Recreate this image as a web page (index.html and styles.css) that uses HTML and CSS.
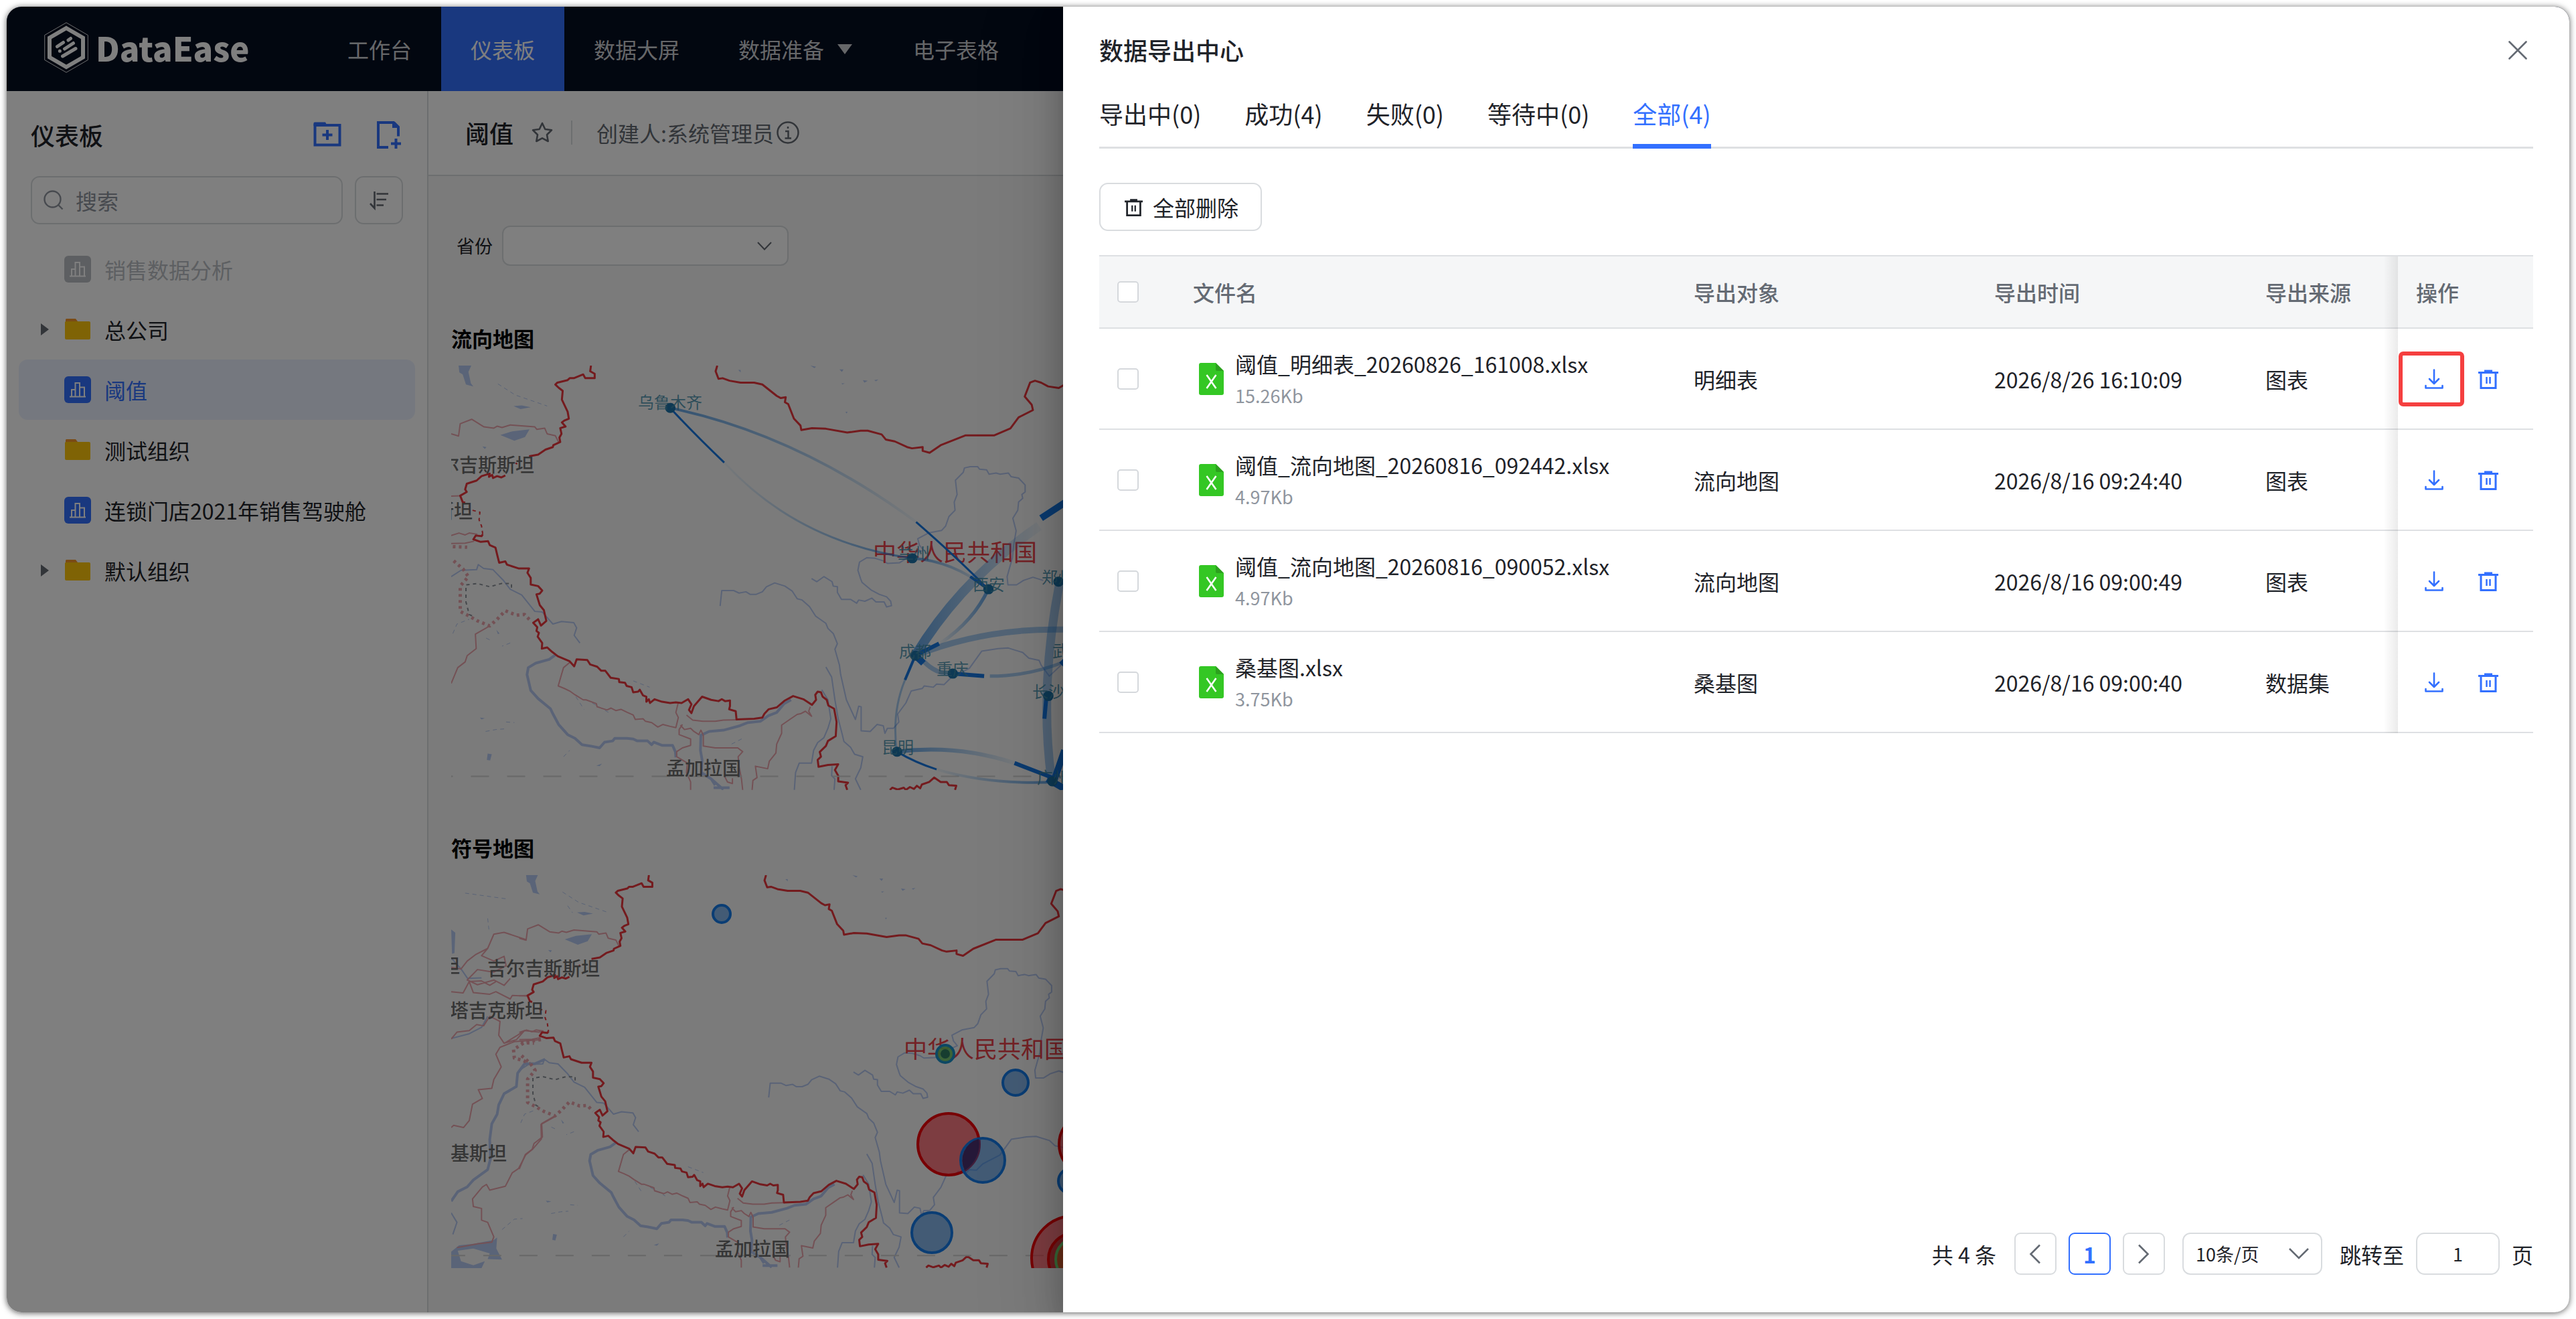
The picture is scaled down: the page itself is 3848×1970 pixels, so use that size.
FILE: index.html
```html
<!DOCTYPE html>
<html lang="zh-CN">
<head>
<meta charset="utf-8">
<title>DataEase</title>
<link rel="stylesheet" href="styles.css">
</head>
<body>
<svg class="defs" aria-hidden="true">
  <defs>
    <symbol id="i-trash" viewBox="0 0 30 30"><path fill="none" stroke="currentColor" stroke-width="3" d="M0 5.500H30M4 6V28.500H26V6M9 3H21"/><path fill="none" stroke="currentColor" stroke-width="2.500" d="M12.500 12V22M17.500 12V22"/></symbol>
    <symbol id="i-download" viewBox="0 0 30 30"><path fill="none" stroke="currentColor" stroke-width="2.600" stroke-linecap="round" stroke-linejoin="round" d="M15 1.500V21M8 15L15 22L22 15M2.500 25V28.500H27.500V25"/></symbol>
    <symbol id="i-xls" viewBox="0 0 37 48"><path fill="#34c724" d="M3 0H25L37 12V45a3 3 0 0 1-3 3H3a3 3 0 0 1-3-3V3a3 3 0 0 1 3-3z"/><path fill="#2ca01e" d="M25 0L37 12H27a2 2 0 0 1-2-2z"/><path fill="none" stroke="#fff" stroke-width="2.600" d="M11.500 18L25.500 38M25.500 18L11.500 38"/></symbol>
    <symbol id="i-board" viewBox="0 0 40 40"><rect width="40" height="40" rx="6" fill="currentColor"/><path fill="none" stroke="#fff" stroke-width="2" d="M8 30.500H32M11 30V20H16.500M16.500 30V10H23V30M23 16.500H30V30"/></symbol>
    <symbol id="i-folder" viewBox="0 0 38 32"><path fill="#f5962a" d="M2 0H16L19 4V10H1V2a2 2 0 0 1 1-2z"/><path fill="#ffc60a" d="M1 4H36a2 2 0 0 1 2 2V29a2 2 0 0 1-2 2H2a2 2 0 0 1-2-2V5z"/></symbol>
    <g id="basemap" class="basemap">
      <g class="water">
        <path d="M74,182L105,182 98,202 104,238 110,248 92,242 84,210 76,204zM176,402L205,390 247,384 236,408 210,420zM208,310L228,308 250,314 225,320zM132,438l10,2-4,6zM932,182l14,4-4,4zM1003,194l10,0-4,8zM1060,228l12,2-8,6zM1088,228l10,-2-6,6zM756,196l6,0 0,8zM1008,238l8,0-6,4zM166,1018l8,12-4,2zM126,1296l12,2-8,4zM145,1410l10,2-4,20-8,-2zM410,1448l14,-6-6,8zM1018,328l5,0-3,6z"/>
      </g>
      <g class="river">
        <path d="M56,850L80,830 118,828 122,812 135,824 158,828 182,860 200,890 228,908 260,960 278,962 304,1000 325,992 355,996 362,1012 356,1036 370,1060"/>
        <path d="M712,943L716,894 745,894 758,902 775,898 785,906 800,906 815,898 825,882 845,870 870,880 888,896 900,920 912,924 930,945 945,975 970,998 975,1014 988,1030 998,1062 992,1080 1003,1130 1006,1160 1020,1240 1042,1302 1050,1260 1056,1262 1056,1338 1078,1340 1095,1318 1110,1322 1114,1346 1120,1330 1135,1330 1148,1310 1145,1285 1165,1250 1178,1212 1205,1204 1210,1196 1232,1200 1240,1190 1258,1192 1275,1170 1290,1160 1320,1140 1350,1086 1390,1078 1415,1076 1450,1090 1465,1108 1490,1115 1495,1130 1515,1165 1560,1110"/>
        <path d="M970,1136L984,1168 992,1240 1000,1300 1010,1350 1014,1372 1030,1390 1040,1412 1060,1420 1055,1455 1042,1490 1055,1525M960,1208L975,1240 982,1300 975,1330 965,1360 950,1375 940,1400 935,1440 905,1440 896,1470 893,1525M985,1450L984,1480 992,1490 990,1525"/>
        <path d="M935,856L948,866 965,850 985,866 988,880 998,882 998,900 1008,922 1030,922 1045,934 1050,924 1065,928 1082,918 1092,930 1112,930 1118,946 1130,942 1128,928 1118,914 1100,906 1080,892 1058,868 1055,858 1048,830 1052,804 1070,790 1090,792 1110,800 1120,808 1150,806 1175,785 1208,766 1198,750 1194,730 1220,712 1252,704 1262,690 1270,660 1285,640 1283,614 1290,590 1286,545 1305,520 1308,506 1322,502 1340,502 1345,510 1362,512 1368,526 1385,522 1395,526 1415,522 1422,534 1440,538 1456,560 1456,582 1448,590 1450,602 1440,614 1438,640 1426,665 1434,705 1428,750 1425,790 1412,850 1414,876 1435,876 1452,862 1475,852 1500,862"/>
        <path class="wide" d="M312,1096L295,1112 262,1124 244,1138 241,1160 250,1210 268,1236 298,1268 304,1284 318,1318 340,1350 358,1362 375,1382 395,1386 418,1392 430,1374 450,1370 455,1362 485,1362 500,1364 510,1370 535,1370 545,1382 550,1374 570,1384 596,1384 603,1405 604,1422"/>
        <path class="wide" d="M885,1240L868,1252 850,1280 830,1290 810,1308 780,1312 760,1322 720,1336 685,1340 665,1352 664,1400 668,1430 666,1470 690,1490 700,1510M690,1490L720,1524M696,1518H735"/>
        <path class="thin" d="M60,1030L70,1000 100,985M150,1050L140,1044M200,1060L180,1070M360,1230L380,1270M400,1250L440,1280M190,1310L210,1312M140,1340L165,1334 185,1332M500,1180L540,1200M740,1380L770,1360M330,1420L345,1400M170,240L212,275 290,310"/>
      </g>
      <g class="minor">
        <path d="M56,398L74,405 78,366 106,352 136,376 160,380 168,374 180,378 200,370 260,376 265,384 284,380 290,398 310,404 318,424M56,595L78,594M56,720L75,712 90,718 100,712 120,716M56,745L90,744 112,738"/>
        <path d="M150,1006L115,1032 117,1078 95,1100 90,1120 72,1138 56,1188"/>
        <path d="M345,1122L330,1138 325,1160 317,1196 332,1204 345,1212 358,1224 378,1240 385,1240 410,1252 412,1262 436,1272 446,1266 458,1274 470,1270 486,1280 500,1288 505,1302 524,1300 530,1308 545,1312 560,1326 572,1318 590,1324 604,1328 610,1296 604,1280 610,1248M630,1288L645,1304 670,1308 700,1308 720,1304 755,1303"/>
        <path d="M620,1318L612,1334 612,1350 640,1364 640,1384 620,1392 606,1404 606,1420 632,1440 630,1470 640,1500 640,1525M615,1320L625,1334 640,1330 648,1340 660,1350 665,1336 671,1352 671,1386 700,1392 755,1392 767,1404 756,1420 758,1450 764,1490 767,1525M790,1525L792,1495 802,1486 798,1450 828,1458 832,1434 848,1408 850,1380 862,1346 862,1320 882,1302 900,1286 908,1284 920,1276 935,1292 928,1276 932,1262M722,1480L730,1500 742,1505 742,1488"/>
      </g>
      <path class="minor dots" d="M60,755L95,757M62,800L85,826 98,850 78,880 78,960 100,975 120,990 150,1006 168,985 188,958 215,972 235,970 250,990"/>
      <path class="claim" d="M203,885L203,872 178,872 150,882 120,872 92,876 92,930 100,970 110,976"/>
      <path class="claim red" d="M108,640L126,646 124,670 130,690 133,716"/>
      <g class="border">
        <path d="M397,182L395,200 406,208 406,222 383,222 378,210 355,222 345,222 340,228 315,236 310,242 318,252 328,262 326,290 340,328 343,350 332,356 326,362 335,375 322,380 325,398 320,410 322,424 305,434 304,440 286,448 268,464 246,469M214,494l2,-4M188,530L178,536 168,532 158,538 156,528 148,534 150,524 130,532 118,546 94,556 90,574 94,582 78,594 84,614 90,616"/>
        <path d="M133,716L130,722 116,720 110,732 128,740 146,738 150,750 164,758 168,780 173,806 188,802 192,812 220,824 246,824 242,838 250,854 250,875 268,880 278,894 272,904 264,906 272,940 282,956 288,990 275,1005 268,985 256,996 266,1010 264,1022 270,1028 267,1040 278,1060 277,1078 290,1074 302,1088 316,1102 345,1118 356,1134 362,1112 388,1114 395,1128 412,1135 422,1148 432,1148 445,1170 465,1174 466,1184 480,1186 484,1196 496,1200 500,1216 512,1214 516,1208 524,1226 532,1230 532,1246 538,1238 541,1250 552,1238 570,1246 590,1250 604,1248 618,1250 634,1238 642,1254 636,1272 642,1282 648,1260 668,1230 690,1240 708,1244 716,1238 724,1244 736,1242 736,1260 734,1270 750,1276 752,1302 795,1300 815,1296 820,1284 830,1270 850,1264 870,1242 890,1228 915,1238 936,1256 946,1240 944,1224 950,1214 958,1216 962,1230 972,1240 976,1258 990,1268 996,1310 994,1355 975,1370 970,1386 955,1405 958,1420 950,1430 952,1452 975,1446 1000,1444 992,1462 1000,1480 1000,1498 1024,1502 1018,1510 1022,1525"/>
        <path d="M1126,1525L1132,1518 1145,1524 1160,1518 1165,1525 1175,1516 1185,1522 1192,1512 1200,1520 1204,1508 1222,1500 1234,1486 1250,1500 1265,1500 1270,1510 1288,1512 1285,1525"/>
        <path d="M705,182L701,200 708,224 718,222 735,230 762,236 795,236 815,242 850,278 860,285 872,282 870,298 878,304 892,350 908,372 910,386 936,380 970,382 1022,394 1055,388 1072,388 1106,400 1116,416 1138,422 1168,440 1180,444 1206,440 1206,452 1223,458 1250,434 1310,403 1380,403 1420,381 1440,346 1475,323 1472,306 1455,280 1468,236 1480,230 1495,236 1512,248 1538,253 1560,236 1600,230"/>
      </g>
    </g>
    <linearGradient id="fade-r"><stop offset="0" stop-color="#2a83dc" stop-opacity=".7"/><stop offset="1" stop-color="#2a83dc" stop-opacity=".05"/></linearGradient>
    <linearGradient id="fade-l"><stop offset="0" stop-color="#2a83dc" stop-opacity=".05"/><stop offset="1" stop-color="#2a83dc" stop-opacity=".7"/></linearGradient>
  </defs>
</svg>

<div class="window">
  <div class="app">
    <header class="topbar">
      <a class="logo" href="#">
        <svg width="66" height="76" viewBox="0 0 66 76"><path fill="none" stroke="#ddd" stroke-width="1" d="M33 .8L65.300 19.500V56.500L33 75.200L.7 56.500V19.500z"/><path fill="none" stroke="#fff" stroke-width="6" d="M33 9L58 23.500V52.500L33 67L8 52.500V23.500z"/><path stroke="#fff" stroke-width="5" stroke-linecap="round" d="M19.500 36.500L28.500 30.500M36 27L39.500 24.500M30.500 40L43.500 31.500M23.300 43.300h.1M27.500 51L47 39.500"/></svg>
        <span>DataEase</span>
      </a>
      <nav class="nav">
        <a href="#">工作台</a>
        <a href="#" class="current">仪表板</a>
        <a href="#">数据大屏</a>
        <a href="#" class="more">数据准备<svg width="22" height="15" viewBox="0 0 22 15"><path fill="currentColor" d="M0 0H22L11 15z"/></svg></a>
        <a href="#">电子表格</a>
      </nav>
    </header>
    <div class="body">
      <aside class="sidebar">
        <div class="side-head">
          <h1>仪表板</h1>
          <button type="button" aria-label="新建文件夹"><svg width="42" height="42" viewBox="0 0 42 42"><path fill="none" stroke="currentColor" stroke-width="4" d="M2.500 7H39.500V36.500H2.500z"/><path fill="currentColor" d="M.5 4a1.500 1.500 0 0 1 1.500-1.500H18L21 8H.5z"/><path stroke="currentColor" stroke-width="4" d="M21 14V29M13.500 21.500H28.500"/></svg></button>
          <button type="button" aria-label="新建仪表板"><svg width="42" height="42" viewBox="0 0 42 42"><path fill="none" stroke="currentColor" stroke-width="4" d="M20 40H5V3H28L35 10V23.500"/><path fill="currentColor" d="M26 2H30L37 9V11H26z"/><path stroke="currentColor" stroke-width="4" d="M31.500 27V42M24 34.500H39"/></svg></button>
        </div>
        <div class="search">
          <label class="search-box"><svg width="30" height="30" viewBox="0 0 30 30"><circle cx="13.500" cy="13.500" r="12" fill="none" stroke="currentColor" stroke-width="2.400"/><path stroke="currentColor" stroke-width="2.400" d="M22 22L28.500 28.500"/></svg><input type="text" placeholder="搜索" aria-label="搜索"></label>
          <button type="button" class="sort" aria-label="排序"><svg width="30" height="30" viewBox="0 0 30 30"><path fill="none" stroke="currentColor" stroke-width="2.600" d="M8.500 2V27L2 20M11.500 5.500H29M11.500 14H26M11.500 22.500H22"/></svg></button>
        </div>
        <ul class="tree">
          <li class="off"><i></i><svg class="ico"><use href="#i-board"/></svg>销售数据分析</li>
          <li><i class="arrow"></i><svg class="ico fold"><use href="#i-folder"/></svg>总公司</li>
          <li class="active"><i></i><svg class="ico"><use href="#i-board"/></svg>阈值</li>
          <li><i></i><svg class="ico fold"><use href="#i-folder"/></svg>测试组织</li>
          <li><i></i><svg class="ico"><use href="#i-board"/></svg>连锁门店2021年销售驾驶舱</li>
          <li><i class="arrow"></i><svg class="ico fold"><use href="#i-folder"/></svg>默认组织</li>
        </ul>
      </aside>
      <main class="board">
        <div class="board-head">
          <h2>阈值</h2>
          <svg class="star" width="34" height="34" viewBox="0 0 34 34"><path fill="none" stroke="currentColor" stroke-width="2.600" stroke-linejoin="round" d="M17 3L21.300 12L31 13.300L24 20.200L25.700 30L17 25.300L8.300 30L10 20.200L3 13.300L12.700 12z"/></svg>
          <span class="sep"></span>
          <span class="creator">创建人:系统管理员</span>
          <svg width="34" height="34" viewBox="0 0 34 34"><circle cx="17" cy="17" r="15.500" fill="none" stroke="currentColor" stroke-width="2.500"/><path fill="none" stroke="currentColor" stroke-width="2.500" d="M13 15H17.500V25M12.500 25.500H22M17 8V11"/></svg>
        </div>
        <div class="canvas">
          <div class="filter">
            <label for="province">省份</label>
            <span class="select"><select id="province"><option></option></select><svg width="22" height="13" viewBox="0 0 22 13"><path fill="none" stroke="currentColor" stroke-width="2" d="M1 1L11 11.500L21 1"/></svg></span>
          </div>
          <section class="chart">
            <h3>流向地图</h3>
            <svg class="map" width="914" height="634" viewBox="0 0 914 634">
              <g transform="translate(-34.300 -85.900) scale(.6124 .4719)">
                <use href="#basemap"/>
                <path class="tropic" d="M16,1482H1600"/>
              </g>
              <g class="place">
                <text x="124" y="159" text-anchor="end">尔吉斯斯坦</text>
                <text x="32" y="228" text-anchor="end">斯坦</text>
                <text x="321" y="612">孟加拉国</text>
              </g>
              <text class="country" x="630" y="292">中华人民共和国</text>
              <g transform="translate(-34.300 -85.900) scale(.6124 .4719)" class="flow">
                <path stroke="url(#fade-r)" stroke-width="4" d="M590,316Q900,400 1190,677"/>
                <path stroke="url(#fade-l)" stroke-width="3" d="M722,489Q900,740 1180,792"/>
                <path stroke="url(#fade-r)" stroke-width="4" d="M1180,792Q1280,800 1366,890"/>
                <path stroke="url(#fade-r)" stroke-width="14" d="M1188,1100Q1300,860 1490,690"/>
                <path stroke="url(#fade-l)" stroke-width="5" d="M1250,1060Q1330,990 1366,890"/>
                <path class="pale" stroke-width="9" d="M1188,1100Q1360,1010 1560,1018"/>
                <path class="pale" stroke-width="7" d="M1210,1120Q1240,1160 1279,1157"/>
                <path class="pale" stroke-width="5" d="M1370,1165Q1470,1165 1560,1115"/>
                <path class="pale" stroke-width="3" d="M1163,1177Q1130,1280 1143,1404"/>
                <path stroke="url(#fade-r)" stroke-width="6" d="M1143,1404Q1290,1380 1430,1440"/>
                <path stroke="url(#fade-l)" stroke-width="4" d="M1240,1460Q1370,1510 1530,1500"/>
                <path class="pale" stroke-width="13" d="M1540,870Q1490,1200 1520,1490"/>
                <path class="hot" stroke-width="3" d="M590,316Q650,400 722,489M1190,677Q1290,790 1366,890M1143,1404Q1190,1440 1240,1460"/>
                <path class="hot" stroke-width="4" d="M1188,1100L1163,1177M1322,850L1366,890"/>
                <path class="hot" stroke-width="6" d="M1188,1100L1246,1062M1279,1157L1356,1165M1430,1440L1530,1490M1508,1228L1503,1300"/>
                <path class="hot" stroke-width="10" d="M1495,665L1560,610M1192,1104L1208,1124M1545,1130L1560,1110M1552,1400L1524,1505M1510,1490L1550,1520"/>
                <path class="node" d="M590,316h1M1180,792h1M1366,890h1M1188,1100h1M1279,1157h1M1143,1404h1M1512,1228h1M1537,866h1M1522,1498h1"/>
              </g>
              <g class="city">
                <text x="279" y="64">乌鲁木齐</text>
                <text x="667" y="289">兰州</text>
                <text x="779" y="336">西安</text>
                <text x="882" y="325">郑州</text>
                <text x="669" y="436">成都</text>
                <text x="725" y="462">重庆</text>
                <text x="898" y="435">武汉</text>
                <text x="868" y="496">长沙</text>
                <text x="643" y="579">昆明</text>
                <text x="875" y="624">广州</text>
              </g>
            </svg>
          </section>
          <section class="chart">
            <h3>符号地图</h3>
            <svg class="map" width="914" height="587" viewBox="0 0 914 587">
              <g transform="translate(-34.300 -76.900) scale(.6124 .4719)">
                <g class="basemap">
                  <path class="water" d="M56,1355L75,1335 110,1330 160,1318 168,1310 166,1345 180,1380 145,1378 150,1360 110,1345 72,1352 80,1385 110,1398 138,1385 130,1407 56,1407zM56,335L66,345 64,410 58,412zM292,1194l8,2-6,2z"/>
                  <g class="river"><path d="M56,425L80,460 96,490 130,488M56,680L100,665 130,645 145,610M56,1232L70,1262 60,1300"/><path class="wide" d="M56,1195L72,1165 95,1150 110,1128 145,1095 152,1060 150,1000 155,950 168,920 172,890 185,855 215,832 218,790 235,760 260,760 285,746"/><path class="thin" d="M90,220L190,238M145,300L148,335M180,1285L210,1252 230,1250M340,260L352,282"/></g>
                  <path class="minor" d="M56,455L80,460 95,435 115,415 145,395 160,350 185,344 240,368M145,395L130,418 160,435 185,420 190,450 160,470 120,462 95,495 120,510 160,495 185,512 200,490M56,532L85,536 100,500 110,535 150,540 165,532 200,555 205,544 243,546M100,500L130,498 150,512 165,500M56,682L70,660 100,655 118,636 135,640 150,610 175,626 172,670 185,695 215,684 235,655 270,660 280,656M235,655L215,672 186,695M270,684L210,690 175,708 165,730 178,770 160,810 155,838 122,842 132,870 108,888 100,940 86,962 62,955 56,962M308,928L275,952 276,998 255,1030 238,1048 220,1092 205,1105 188,1148 150,1160 142,1142 132,1150 108,1188 110,1212 130,1218 130,1255 145,1262 160,1308 155,1325 120,1330 70,1342"/>
                  <path class="minor dots" d="M275,684L238,690 208,715 210,742 232,750 248,760"/>
                </g>
                <use href="#basemap" transform="matrix(.9276 0 0 .925 170 -5.400)"/>
                <path class="tropic" d="M46,1367H1600"/>
              </g>
              <g class="place">
                <text x="13" y="146" text-anchor="end">坦</text>
                <text x="54" y="150">吉尔吉斯斯坦</text>
                <text x="138" y="213" text-anchor="end">塔吉克斯坦</text>
                <text x="83" y="426" text-anchor="end">基斯坦</text>
                <text x="394" y="569">孟加拉国</text>
              </g>
              <text class="country" x="676" y="273">中华人民共和国</text>
              <g class="bubble">
                <circle class="red" cx="743" cy="402" r="46"/>
                <circle class="red" cx="954" cy="402" r="46"/>
                <circle class="red" cx="930" cy="572" r="63"/>
                <circle class="red deep" cx="932" cy="574" r="40"/>
                <circle class="amber" cx="936" cy="574" r="33"/>
                <circle cx="404" cy="58" r="13"/>
                <circle class="green" cx="738" cy="267" r="13"/>
                <circle class="core" cx="738" cy="267" r="7"/>
                <circle cx="843" cy="310" r="19"/>
                <circle cx="794" cy="426" r="33"/>
                <path class="lens" d="M788 394A46 46 0 0 1 767 441A33 33 0 0 1 788 394z"/>
                <circle cx="718" cy="534" r="30"/>
                <circle cx="926" cy="457" r="19"/>
              </g>
            </svg>
          </section>
        </div>
      </main>
    </div>
  </div>

  <div class="scrim"></div>

  <section class="drawer" role="dialog" aria-labelledby="drawer-title">
    <header class="drawer-head">
      <h2 id="drawer-title">数据导出中心</h2>
      <button type="button" aria-label="关闭"><svg width="28" height="28" viewBox="0 0 28 28"><path stroke="currentColor" stroke-width="2.600" stroke-linecap="round" d="M1.500 1.500L26.500 26.500M26.500 1.500L1.500 26.500"/></svg></button>
    </header>
    <div class="tabs" role="tablist">
      <button type="button" role="tab">导出中(0)</button>
      <button type="button" role="tab">成功(4)</button>
      <button type="button" role="tab">失败(0)</button>
      <button type="button" role="tab">等待中(0)</button>
      <button type="button" role="tab" aria-selected="true" class="on">全部(4)</button>
    </div>
    <button type="button" class="clear"><svg width="27" height="27"><use href="#i-trash"/></svg>全部删除</button>
    <table class="files">
      <colgroup><col class="c-check"><col class="c-name"><col class="c-object"><col class="c-time"><col class="c-source"><col class="c-action"></colgroup>
      <thead>
        <tr><th><input type="checkbox" aria-label="全选"></th><th>文件名</th><th>导出对象</th><th>导出时间</th><th>导出来源</th><th class="action">操作</th></tr>
      </thead>
      <tbody>
        <tr>
          <td><input type="checkbox" aria-label="选择文件"></td>
          <td><div class="file"><svg><use href="#i-xls"/></svg><div><p>阈值_明细表_20260826_161008.xlsx</p><small>15.26Kb</small></div></div></td>
          <td>明细表</td><td>2026/8/26 16:10:09</td><td>图表</td>
          <td class="action"><div class="ops"><button type="button" class="marked" aria-label="下载"><svg><use href="#i-download"/></svg></button><button type="button" aria-label="删除"><svg><use href="#i-trash"/></svg></button></div></td>
        </tr>
        <tr>
          <td><input type="checkbox" aria-label="选择文件"></td>
          <td><div class="file"><svg><use href="#i-xls"/></svg><div><p>阈值_流向地图_20260816_092442.xlsx</p><small>4.97Kb</small></div></div></td>
          <td>流向地图</td><td>2026/8/16 09:24:40</td><td>图表</td>
          <td class="action"><div class="ops"><button type="button" aria-label="下载"><svg><use href="#i-download"/></svg></button><button type="button" aria-label="删除"><svg><use href="#i-trash"/></svg></button></div></td>
        </tr>
        <tr>
          <td><input type="checkbox" aria-label="选择文件"></td>
          <td><div class="file"><svg><use href="#i-xls"/></svg><div><p>阈值_流向地图_20260816_090052.xlsx</p><small>4.97Kb</small></div></div></td>
          <td>流向地图</td><td>2026/8/16 09:00:49</td><td>图表</td>
          <td class="action"><div class="ops"><button type="button" aria-label="下载"><svg><use href="#i-download"/></svg></button><button type="button" aria-label="删除"><svg><use href="#i-trash"/></svg></button></div></td>
        </tr>
        <tr>
          <td><input type="checkbox" aria-label="选择文件"></td>
          <td><div class="file"><svg><use href="#i-xls"/></svg><div><p>桑基图.xlsx</p><small>3.75Kb</small></div></div></td>
          <td>桑基图</td><td>2026/8/16 09:00:40</td><td>数据集</td>
          <td class="action"><div class="ops"><button type="button" aria-label="下载"><svg><use href="#i-download"/></svg></button><button type="button" aria-label="删除"><svg><use href="#i-trash"/></svg></button></div></td>
        </tr>
      </tbody>
    </table>
    <footer class="pager">
      <span class="total">共 4 条</span>
      <button type="button" class="page" aria-label="上一页"><svg width="18" height="30" viewBox="0 0 18 30"><path fill="none" stroke="currentColor" stroke-width="2.600" d="M16 1.500L2.500 15L16 28.500"/></svg></button>
      <button type="button" class="page on">1</button>
      <button type="button" class="page" aria-label="下一页"><svg width="18" height="30" viewBox="0 0 18 30"><path fill="none" stroke="currentColor" stroke-width="2.600" d="M2 1.500L15.500 15L2 28.500"/></svg></button>
      <span class="select size"><select aria-label="每页条数"><option>10条/页</option></select><svg width="30" height="17" viewBox="0 0 30 17"><path fill="none" stroke="currentColor" stroke-width="2.600" d="M1 1L15 15L29 1"/></svg></span>
      <label for="jump">跳转至</label>
      <input type="text" id="jump" value="1">
      <span>页</span>
    </footer>
  </section>
</div>
</body>
</html>
```
FILE: styles.css
```css
* { box-sizing: border-box; }
html, body { margin: 0; }
body {
  padding: 10px;
  background: #fff;
  color: #1f2329;
  font-family: "Noto Sans CJK SC", "Noto Sans", sans-serif;
  font-size: 32px;
  line-height: 50px;
}
h1, h2, h3, p, ul { margin: 0; padding: 0; }
button, input, select { font: inherit; color: inherit; }
button { padding: 0; border: 0; background: none; cursor: pointer; }
a { color: inherit; text-decoration: none; }
svg { display: block; flex: none; }
.defs { position: absolute; width: 0; height: 0; }

.window {
  position: relative;
  min-height: calc(100vh - 20px);
  display: flex;
  overflow: hidden;
  border-radius: 22px;
  background: #fff;
}
body::before {
  content: "";
  position: absolute;
  inset: 10px;
  border-radius: 22px;
  box-shadow: 0 1px 10px rgba(0, 0, 0, .65);
}
.app { flex: 1; display: flex; flex-direction: column; min-width: 0; }

/* top bar */
.topbar { display: flex; height: 126px; background: #050e21; color: #cdcfd3; }
.logo {
  display: flex; align-items: center; gap: 11px;
  width: 465px; padding: 0 0 4px 56px;
  color: #fff; font-size: 49px; font-weight: 900;
}
.nav { display: flex; }
.nav a { display: flex; align-items: center; padding: 0 44px; }
.nav .current { background: #3370ff; color: #fff; }
.nav .more { gap: 20px; padding-right: 47px; }

.body { flex: 1; display: flex; }

/* sidebar */
.sidebar { width: 630px; flex: none; border-right: 2px solid #d9dcdf; }
.side-head { display: flex; align-items: center; gap: 50px; height: 127px; padding: 2px 36px 0; color: #3370ff; }
.side-head h1 { flex: 1; color: #1f2329; font-size: 36px; font-weight: 500; }
.search { display: flex; gap: 18px; padding: 0 36px; }
.search-box {
  flex: 1; display: flex; align-items: center; gap: 18px;
  height: 72px; padding: 0 17px; min-width: 0;
  border: 2px solid #d9dcdf; border-radius: 13px; color: #8f959e;
}
.search-box input { flex: 1; min-width: 0; padding: 0; border: 0; background: none; outline: 0; }
.search-box input::placeholder { color: #8f959e; opacity: 1; }
.sort { display: flex; align-items: center; justify-content: center; width: 72px; height: 72px; border: 2px solid #d9dcdf; border-radius: 13px; color: #646a73; }
.tree { padding: 22px 18px; list-style: none; }
.tree li { display: flex; align-items: center; height: 90px; padding-left: 33px; border-radius: 13px; white-space: nowrap; }
.tree i { width: 35px; flex: none; }
.tree .arrow::before { content: ""; display: block; width: 0; border: 9px solid transparent; border-left: 12px solid #646a73; border-right: 0; }
.tree .ico { width: 40px; height: 40px; margin-right: 20px; color: #3370ff; }
.tree .fold { width: 38px; height: 32px; margin: 0 21px 0 1px; }
.tree .off, .tree .off .ico { color: #bbbfc4; }
.tree .active { background: #ebf1ff; color: #3370ff; }

/* dashboard */
.board { flex: 1; min-width: 0; display: flex; flex-direction: column; }
.board-head { display: flex; align-items: center; height: 127px; padding: 0 55px 2px; border-bottom: 2px solid #d9dcdf; color: #646a73; }
.board-head h2 { margin-right: 26px; color: #1f2329; font-size: 36px; font-weight: 500; }
.sep { width: 2px; height: 36px; margin: 0 36px 0 26px; background: #d9dcdf; }
.creator { margin-right: 4px; }
.canvas { flex: 1; padding: 74px 34px 0; background: #f6f7f7; }
.filter { display: flex; align-items: center; gap: 14px; height: 60px; margin-bottom: 85px; padding-left: 8px; font-size: 27px; }
.select { position: relative; display: block; width: 428px; color: #646a73; }
.select select { appearance: none; display: block; width: 100%; height: 60px; padding: 0 18px; border: 2px solid #d9dcdf; border-radius: 12px; background: #fff; color: #1f2329; }
.select svg { position: absolute; top: 0; bottom: 0; right: 25px; margin: auto 0; }
.chart { margin-bottom: 63px; }
.chart h3 { margin-bottom: 18px; color: #000; font-size: 31px; font-weight: 700; line-height: 46px; }

/* maps */
.basemap path, .flow path, .tropic { fill: none; vector-effect: non-scaling-stroke; stroke-linejoin: round; }
.basemap .water path, .basemap path.water { fill: #b4c8f0; }
.basemap .river { stroke: #b4c6ee; stroke-width: 2px; }
.basemap .river .wide { stroke-width: 4px; }
.basemap .river .thin { stroke-width: 1px; stroke-dasharray: 6 5; }
.basemap .minor { stroke: #e8a2aa; stroke-width: 2px; }
.basemap .dots { stroke-width: 5px; stroke-dasharray: 4 5; }
.basemap .claim { stroke: #8b9198; stroke-width: 2px; stroke-dasharray: 5 5; }
.basemap .claim.red, .basemap .border { stroke: #e8363d; }
.basemap .border { stroke-width: 3px; }
.tropic { stroke: #d0d0d0; stroke-width: 2px; stroke-dasharray: 27 27; }
.map text { font-size: 28px; }
.place text { fill: #6b6b6b; font-weight: 500; }
.map .country { font-size: 35px; fill: #e8434a; }
.map .city text { font-size: 24px; fill: #3f8ba8; fill-opacity: .85; }
.flow .pale { stroke: #2a83dc; stroke-opacity: .4; }
.flow .hot { stroke: #1677e0; }
.flow .node { stroke: #1c72a8; stroke-width: 15px; stroke-linecap: round; }
.bubble circle { fill: #1677e0; fill-opacity: .5; stroke: #147be8; stroke-width: 4px; }
.bubble .red { fill: #ff0010; stroke: #f00008; }
.bubble .deep { fill: #b00000; }
.bubble .amber { fill: #d08020; stroke: #70d070; }
.bubble .green { fill: #6cc060; fill-opacity: .9; stroke: #1a90c8; }
.bubble .core { fill: #2f7a60; fill-opacity: 1; stroke: none; }
.bubble .lens { fill: #4b3070; }

/* drawer */
.scrim { position: absolute; inset: 0; background: rgba(0, 0, 0, .5); }
.drawer {
  position: absolute; top: 0; right: 0; bottom: 0;
  width: min(2250px, 94%);
  display: flex; flex-direction: column;
  padding: 0 54px 56px;
  background: #fff;
  box-shadow: 0 36px 108px 36px rgba(0, 0, 0, .08), 0 27px 64px rgba(0, 0, 0, .12), 0 13px 36px rgba(0, 0, 0, .16);
}
.drawer-head { display: flex; justify-content: space-between; align-items: center; height: 130px; padding-right: 9px; color: #646a73; }
.drawer-head h2 { padding-bottom: 2px; color: #1f2329; font-size: 36px; font-weight: 500; }
.tabs { display: flex; gap: 65px; height: 82px; border-bottom: 3px solid #dee0e3; font-size: 36px; }
.tabs button { height: 82px; padding-bottom: 18px; border-bottom: 7px solid transparent; line-height: 50px; }
.tabs .on { border-color: #3370ff; color: #3370ff; }
.clear {
  display: flex; align-items: center; gap: 15px; align-self: flex-start;
  height: 72px; margin: 51px 0 36px; padding: 0 33px 0 36px;
  border: 2px solid #d9dcdf; border-radius: 13px;
}
.files { width: 100%; table-layout: fixed; border-collapse: separate; border-spacing: 0; text-align: left; }
.c-check { width: 113px; }
.c-name { width: 748px; }
.c-object { width: 449px; }
.c-time { width: 405px; }
.c-source { width: 225px; }
.c-action { width: 202px; }
.files th, .files td { padding: 0 27px; border-bottom: 2px solid #dee0e3; background: #fff; white-space: nowrap; }
.files th { height: 110px; border-top: 2px solid #dee0e3; background: #f5f6f7; color: #646a73; font-weight: 500; }
.files td { height: 151px; }
.files input { appearance: none; display: block; width: 32px; height: 32px; margin: 0; border: 2px solid #d5d8dc; border-radius: 5px; background: #fff; }
.files .action { position: relative; }
.files .action::before {
  content: ""; position: absolute; top: 0; bottom: -2px; left: -22px; width: 22px;
  background: linear-gradient(to left, rgba(0, 0, 0, .08), rgba(0, 0, 0, 0));
}
.file { display: flex; align-items: center; gap: 17px; padding-left: 9px; }
.file svg { width: 37px; height: 48px; }
.file p { line-height: 50px; }
.file small { display: block; color: #8f959e; font-size: 27px; line-height: 45px; }
.ops { display: flex; align-items: center; gap: 51px; padding-left: 12px; color: #3370ff; }
.ops button { position: relative; }
.ops svg { width: 30px; height: 30px; }
.marked::before { content: ""; position: absolute; inset: -26px -30px -26px -38px; border: 6px solid #f53f3f; border-radius: 7px; }

.pager { display: flex; align-items: center; justify-content: flex-end; margin-top: auto; gap: 18px; }
.pager .total { margin-right: 9px; }
.page { display: flex; align-items: center; justify-content: center; width: 63px; height: 63px; border: 2px solid #d9dcdf; border-radius: 9px; color: #646a73; }
.page.on { border-color: #3370ff; color: #3370ff; font-weight: 700; }
.size { width: 209px; margin: 0 8px; font-size: 27px; }
.size select { height: 63px; }
.size svg { right: 20px; }
#jump { width: 125px; height: 63px; padding: 0; border: 2px solid #d9dcdf; border-radius: 13px; text-align: center; font-size: 27px; }
```
